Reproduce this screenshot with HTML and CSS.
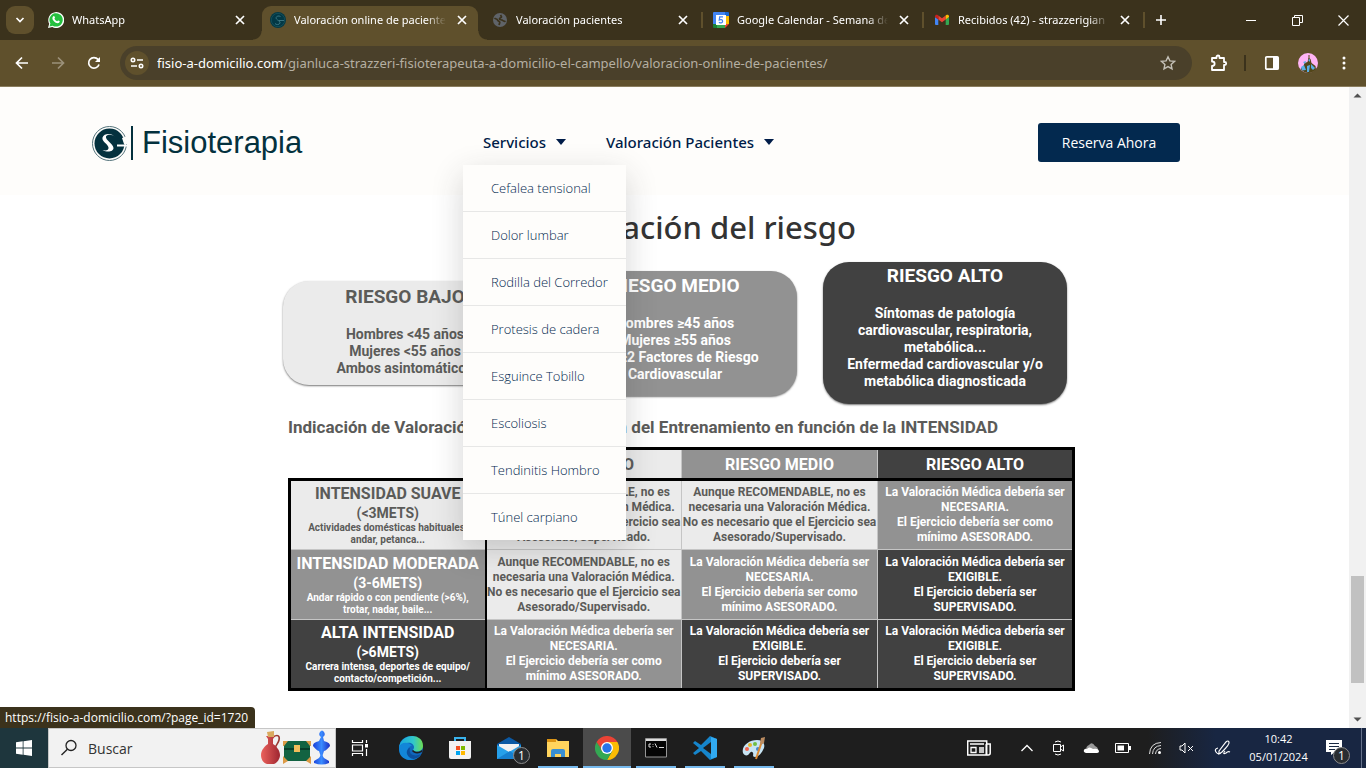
FILE: index.html
```html
<!DOCTYPE html>
<html lang="es">
<head>
<meta charset="utf-8">
<title>Valoración online de pacientes</title>
<link rel="stylesheet" href="styles.css">
</head>
<body>
<svg class="defs" width="0" height="0" aria-hidden="true">
  <symbol id="close" viewBox="0 0 10 10"><path d="M1 1l8 8M9 1L1 9" fill="none" stroke="#fff" stroke-width="1.7"/></symbol>
</svg>

<header class="tabstrip">
  <button class="tab-search" aria-label="Buscar pestañas"><svg width="10" height="10" viewBox="0 0 10 10"><path d="M1.5 3L5 6.5 8.500 3" fill="none" stroke="#fff" stroke-width="1.700"/></svg></button>
  <div class="tab">
    <svg class="favicon" viewBox="0 0 16 16"><path d="M0 16L1.200 11.800A8 8 0 1 1 4.300 15z" fill="#fff"/><path d="M1.500 14.500l.9-3A6.700 6.700 0 1 1 4.700 13.700z" fill="#25c03f"/><path d="M5.400 4.200c.5-.5.900-.3 1.100.2l.5 1.200c.1.500-.6.900-.6 1.200.6 1.100 1.400 1.900 2.600 2.400.4 0 .7-.9 1.200-.8l1.300.7c.6.400-.1 1.700-.8 2-2.700.9-7-3-6.200-5.600.2-.6.500-1 .9-1.300z" fill="#fff"/></svg>
    <span class="tab-title">WhatsApp</span>
    <button class="tab-close" aria-label="Cerrar"><svg width="10" height="10"><use href="#close"/></svg></button>
  </div>
  <div class="tab active">
    <svg class="favicon" viewBox="0 0 16 16"><circle cx="8" cy="8" r="8" fill="#023845"/><circle cx="8" cy="8" r="6.700" fill="none" stroke="#1d5a64" stroke-width=".6"/><path d="M10.500 4.500C8 3 5 5 6.500 7s4 2 3.500 4-4 2-5 .5M9 8.500h5" fill="none" stroke="#387480"/></svg>
    <span class="tab-title">Valoración online de pacientes</span>
    <button class="tab-close" aria-label="Cerrar"><svg width="10" height="10"><use href="#close"/></svg></button>
  </div>
  <div class="tab divided">
    <svg class="favicon" viewBox="0 0 16 16"><circle cx="8" cy="8" r="7" fill="#5f6368"/><path d="M2.500 6c1.500 1.500 2.500.5 3 2s2.500 1 2.300 2.500L7 13M13.500 9c-1.500 1-2.500-.3-3.500-1-1-.6-2.500.2-2.500-1.200S9.800 6 9.500 4.800L8.500 3" fill="none" stroke="#3b321c" stroke-width="1.700"/></svg>
    <span class="tab-title">Valoración pacientes</span>
    <button class="tab-close" aria-label="Cerrar"><svg width="10" height="10"><use href="#close"/></svg></button>
  </div>
  <div class="tab divided">
    <svg class="favicon" viewBox="0 0 16 16"><path d="M0 1q0-1 1-1h11v4H4v8H0z" fill="#4285f4"/><path d="M12 0h3q1 0 1 1v3h-4z" fill="#1967d2"/><path d="M12 4h4v8h-4z" fill="#fbbc04"/><path d="M0 12h4v4H1q-1 0-1-1z" fill="#188038"/><path d="M4 12h8v4H4z" fill="#34a853"/><path d="M12 12h4l-4 4z" fill="#ea4335"/><path d="M3 3h10v10H3z" fill="#fff"/><path d="M10 4.800H6.700L6.300 8c1.300-.8 3.300-.5 3.300 1.200S7 11.500 6 10.200" fill="none" stroke="#4285f4" stroke-width="1.300"/></svg>
    <span class="tab-title">Google Calendar - Semana del 1</span>
    <button class="tab-close" aria-label="Cerrar"><svg width="10" height="10"><use href="#close"/></svg></button>
  </div>
  <div class="tab divided">
    <svg class="favicon" viewBox="0 0 16 16"><path d="M1 5l3.300 2.500V13H2q-1 0-1-1z" fill="#4285f4"/><path d="M15 5l-3.300 2.500V13H14q1 0 1-1z" fill="#34a853"/><path d="M4.300 3.500L8 6.300l3.700-2.800v4L8 10.300 4.300 7.500z" fill="#ea4335"/><path d="M1 4.300C1 2.700 2.700 2.300 3.700 3l.6.500v4L1 5z" fill="#c5221f"/><path d="M15 4.300c0-1.600-1.700-2-2.700-1.300l-.6.500v4L15 5z" fill="#fbbc04"/></svg>
    <span class="tab-title">Recibidos (42) - strazzerigian</span>
    <button class="tab-close" aria-label="Cerrar"><svg width="10" height="10"><use href="#close"/></svg></button>
  </div>
  <button class="new-tab" aria-label="Nueva pestaña"><svg width="12" height="12" viewBox="0 0 12 12"><path d="M6 1v10M1 6h10" stroke="#fff" stroke-width="1.600"/></svg></button>
  <div class="window-controls">
    <button aria-label="Minimizar"><svg width="10" height="10"><path d="M0 5.500h10" stroke="#fff"/></svg></button>
    <button aria-label="Restaurar"><svg width="11" height="11"><path d="M.5 2.500h7v8h-7zM2.500 2.500v-2h8v7h-3" fill="none" stroke="#fff"/></svg></button>
    <button aria-label="Cerrar ventana"><svg width="11" height="11"><path d="M.5.5l10 10M10.500.5l-10 10" stroke="#fff" stroke-width="1.200"/></svg></button>
  </div>
</header>

<div class="toolbar">
  <button class="tool" aria-label="Atrás"><svg width="14" height="14" viewBox="0 0 14 14"><path d="M13 7H2M7 1.500L1.500 7 7 12.500" fill="none" stroke="#fff" stroke-width="1.700"/></svg></button>
  <button class="tool" aria-label="Adelante"><svg width="14" height="14" viewBox="0 0 14 14"><path d="M1 7h11M7 1.500L12.500 7 7 12.500" fill="none" stroke="#9c917a" stroke-width="1.700"/></svg></button>
  <button class="tool" aria-label="Recargar"><svg width="14" height="14" viewBox="0 0 14 14"><path d="M12 8.500A5.300 5.300 0 1 1 11 3.400L12.300 5" fill="none" stroke="#fff" stroke-width="1.700"/><path d="M13 1v5H8z" fill="#fff"/></svg></button>
  <div class="omnibox">
    <button class="site-info" aria-label="Información del sitio"><svg width="14" height="12" viewBox="0 0 14 12"><g fill="none" stroke="#fff" stroke-width="1.600"><circle cx="3" cy="3" r="1.700"/><path d="M7 3h6M1 9h6"/><circle cx="11" cy="9" r="1.700"/></g></svg></button>
    <a class="url" href="#"><b>fisio-a-domicilio.com</b>/gianluca-strazzeri-fisioterapeuta-a-domicilio-el-campello/valoracion-online-de-pacientes/</a>
    <button class="star" aria-label="Añadir a marcadores"><svg width="16" height="16" viewBox="0 0 16 16"><path d="M8 1.800l1.900 4.100 4.500.5-3.300 3 .9 4.400L8 11.600l-4 2.200.9-4.400-3.300-3 4.500-.5z" fill="none" stroke="#c4c0b7" stroke-width="1.400"/></svg></button>
  </div>
  <div class="extensions">
    <button aria-label="Extensiones"><svg width="18" height="18" viewBox="0 0 18 18"><path d="M2 4h4.500V3a1.500 1.500 0 0 1 3 0v1H14v4h.7a1.500 1.500 0 0 1 0 3H14v5H2v-4c3.500 0 3.500-4.500 0-4.500z" fill="none" stroke="#fff" stroke-width="1.800" stroke-linejoin="round"/></svg></button>
    <span class="tool-divider"></span>
    <button aria-label="Panel lateral"><svg width="16" height="16" viewBox="0 0 16 16"><rect x="1.800" y="1.800" width="12.400" height="12.400" rx="1" fill="none" stroke="#fff" stroke-width="1.700"/><path d="M9 2h5v12H9z" fill="#fff"/></svg></button>
    <button aria-label="Perfil"><svg width="20" height="20" viewBox="0 0 20 20"><circle cx="10" cy="10" r="10" fill="#ffb4f5"/><path d="M2.500 16l3-3 1-3 3-1 1-4 2 1 1 4 4 3 .5 3.500A10 10 0 0 1 2.500 16z" fill="#524619"/><path d="M3 14l3-2 2 5-4 .5zM9 13l3-1-1 7H9zM13 11l4 4-2 2-2-2zM10 7l2-1v3zM5 9l3-1-1 3z" fill="#58aee5"/><path d="M11 2v4" stroke="#524619"/></svg></button>
    <button aria-label="Menú"><svg width="4" height="16"><g fill="#fff"><circle cx="2" cy="3" r="1.500"/><circle cx="2" cy="8" r="1.500"/><circle cx="2" cy="13" r="1.500"/></g></svg></button>
  </div>
</div>

<main class="viewport">
  <div class="page">
    <div class="site-header">
      <a class="brand" href="#">
        <svg width="35" height="35" viewBox="0 0 35 35"><circle cx="17.500" cy="17.500" r="17" fill="none" stroke="#54737b"/><circle cx="17.500" cy="17.500" r="15" fill="#04313e"/><path d="M23 11c-2-2.500-8-3-9-.5-1 3.500 7.500 7.500 7.500 11.500 0 3.500-6 5-11 2 3 1 6.500.5 6-2.500-.5-3.500-7-6-6-10C12 7 20 7 23 11z" fill="#fff"/><path d="M25 19.500h10" stroke="#fff" stroke-width="2"/><path d="M30 12l5-2v8h-3z" fill="#fefdfb"/></svg>
        <span class="brand-bar"></span>
        <span class="brand-name">Fisioterapia</span>
      </a>
      <nav>
        <ul class="menu">
          <li><a href="#">Servicios <i class="caret"></i></a>
            <ul class="submenu">
              <li><a href="#">Cefalea tensional</a></li>
              <li><a href="#">Dolor lumbar</a></li>
              <li><a href="#">Rodilla del Corredor</a></li>
              <li><a href="#">Protesis de cadera</a></li>
              <li><a href="#">Esguince Tobillo</a></li>
              <li><a href="#">Escoliosis</a></li>
              <li><a href="#">Tendinitis Hombro</a></li>
              <li><a href="#">Túnel carpiano</a></li>
            </ul>
          </li>
          <li><a href="#">Valoración Pacientes <i class="caret"></i></a></li>
        </ul>
      </nav>
      <button class="book">Reserva Ahora</button>
    </div>

    <section class="content">
      <h1>Estratificación del riesgo</h1>
      <div class="chart">
        <div class="cards">
          <div class="card low"><h2>RIESGO BAJO</h2><p>Hombres &lt;45 años<br>Mujeres &lt;55 años<br>Ambos asintomáticos</p></div>
          <div class="card mid"><h2>RIESGO MEDIO</h2><p>Hombres ≥45 años<br>Mujeres ≥55 años<br>Con ≥2 Factores de Riesgo<br>Cardiovascular</p></div>
          <div class="card high"><h2>RIESGO ALTO</h2><p>Síntomas de patología<br>cardiovascular, respiratoria,<br>metabólica...<br>Enfermedad cardiovascular y/o<br>metabólica diagnosticada</p></div>
        </div>
        <p class="caption"><span>Indicación de Valoración Médica</span> <span>y Gestión del Entrenamiento en función de la INTENSIDAD</span></p>
        <table>
          <thead>
            <tr><td class="blank"></td><th class="low">RIESGO BAJO</th><th class="mid">RIESGO MEDIO</th><th class="high">RIESGO ALTO</th></tr>
          </thead>
          <tbody>
            <tr>
              <th class="low"><span class="level">INTENSIDAD SUAVE</span><span class="mets">(&lt;3METS)</span><small>Actividades domésticas habituales,<br>andar, petanca...</small></th>
              <td class="low">Aunque RECOMENDABLE, no es<br>necesaria una Valoración Médica.<br>No es necesario que el Ejercicio sea<br>Asesorado/Supervisado.</td>
              <td class="low">Aunque RECOMENDABLE, no es<br>necesaria una Valoración Médica.<br>No es necesario que el Ejercicio sea<br>Asesorado/Supervisado.</td>
              <td class="mid">La Valoración Médica debería ser<br>NECESARIA.<br>El Ejercicio debería ser como<br>mínimo ASESORADO.</td>
            </tr>
            <tr>
              <th class="mid"><span class="level">INTENSIDAD MODERADA</span><span class="mets">(3-6METS)</span><small>Andar rápido o con pendiente (&gt;6%),<br>trotar, nadar, baile...</small></th>
              <td class="low">Aunque RECOMENDABLE, no es<br>necesaria una Valoración Médica.<br>No es necesario que el Ejercicio sea<br>Asesorado/Supervisado.</td>
              <td class="mid">La Valoración Médica debería ser<br>NECESARIA.<br>El Ejercicio debería ser como<br>mínimo ASESORADO.</td>
              <td class="high">La Valoración Médica debería ser<br>EXIGIBLE.<br>El Ejercicio debería ser<br>SUPERVISADO.</td>
            </tr>
            <tr>
              <th class="high"><span class="level">ALTA INTENSIDAD</span><span class="mets">(&gt;6METS)</span><small>Carrera intensa, deportes de equipo/<br>contacto/competición...</small></th>
              <td class="mid">La Valoración Médica debería ser<br>NECESARIA.<br>El Ejercicio debería ser como<br>mínimo ASESORADO.</td>
              <td class="high">La Valoración Médica debería ser<br>EXIGIBLE.<br>El Ejercicio debería ser<br>SUPERVISADO.</td>
              <td class="high">La Valoración Médica debería ser<br>EXIGIBLE.<br>El Ejercicio debería ser<br>SUPERVISADO.</td>
            </tr>
          </tbody>
        </table>
      </div>
    </section>
  </div>
  <div class="scrollbar">
    <svg width="17" height="17"><path d="M4.500 10.500h8l-4-4z" fill="#505050"/></svg>
    <div class="track"><div class="thumb"></div></div>
    <svg width="17" height="17"><path d="M4.500 6.500h8l-4 4z" fill="#505050"/></svg>
  </div>
  <div class="status">https://fisio-a-domicilio.com/?page_id=1720</div>
</main>

<footer class="taskbar">
  <button class="start" aria-label="Inicio"><svg width="16" height="16" viewBox="0 0 16 16"><path d="M0 2.300L6.700 1.300v6.300H0zM7.500 1.200L16 0v7.600H7.500zM0 8.400h6.700v6.300L0 13.700zM7.500 8.400H16V16l-8.500-1.200z" fill="#fff"/></svg></button>
  <label class="search">
    <svg width="18" height="18" viewBox="0 0 18 18"><circle cx="11" cy="6.500" r="5" fill="none" stroke="#222" stroke-width="1.300"/><path d="M7.400 10.200L1.500 16" stroke="#222" stroke-width="1.400"/></svg>
    <input type="text" placeholder="Buscar" aria-label="Buscar">
    <svg width="72" height="36" viewBox="0 0 72 36">
      <defs><linearGradient id="vase"><stop offset="0" stop-color="#eb625d"/><stop offset="1" stop-color="#9e2630"/></linearGradient><linearGradient id="blue"><stop offset="0" stop-color="#1a3ed8"/><stop offset=".5" stop-color="#398bff"/><stop offset="1" stop-color="#1a2dc2"/></linearGradient></defs>
      <path d="M13 7c5-3 7-1 6 3-.5 3-3 5-4 8" fill="none" stroke="#9c3932" stroke-width="1.600"/><path d="M6 6h9l-2 3v5c3 2 7 6 7 11 0 4-3 8-6 9H7c-4-1-6-5-6-9 0-5 4-9 7-11V9z" fill="url(#vase)"/><path d="M7 2l7-1v6H8z" fill="#d9a95e"/>
      <path d="M24 13l2-2h22l2 2v18H24z" fill="#126342"/><path d="M24 19h26" stroke="#073d29" stroke-width="2"/><path d="M23 11h5l-4 5h-1zM51 11h-5l4 5h1zM23 34v-8l5 5zM51 34v-8l-5 5z" fill="#dc9a45"/><path d="M34 15h6v7h-6z" fill="#f2bd5b"/>
      <path d="M61 7q-3-2-1-5 2-3 4 0 2 3-1 5l1 4c3 1 6 2 6 5-2 2-4 5-6 5l-1 3q-1 2 1 4l5 3v2q-7 3-15 0v-2l5-3q2-2 1-4l-1-3c-2 0-4-3-6-5 0-3 3-4 6-5z" fill="url(#blue)"/>
    </svg>
  </label>
  <div class="apps">
    <button class="app taskview" aria-label="Vista de tareas"><svg width="18" height="16" viewBox="0 0 18 16"><path d="M1.500 0v2.500h10V0M1.500 16v-2.500h10V16M1.500 5h10v6h-10zM15.500 0v3M15.500 9v7" fill="none" stroke="#fff" stroke-width="1.200"/><path d="M14 4h3v3.500h-3z" fill="#fff"/></svg></button>
    <button class="app" aria-label="Edge"><svg width="24" height="24" viewBox="0 0 24 24"><defs><linearGradient id="edge"><stop offset="0" stop-color="#18a6df"/><stop offset=".6" stop-color="#31c7ca"/><stop offset="1" stop-color="#6ddd52"/></linearGradient></defs><circle cx="12" cy="12" r="12" fill="#1067bd"/><path d="M0 12C1-3 24-4 24 10c0 6-8 7-10 4 3-4-1-8-6-7-4 0-7 2-8 5z" fill="url(#edge)"/><path d="M0 11c2-5 10-6 13-1-4 0-5 4-3 7 2 4 8 5 12 1-4 8-17 8-21 0-1-2-1-5-1-7z" fill="#1286d8"/><path d="M11 12c-1 3 0 6 3 7 3 1 6 0 8-1-4 7-12 6-14 0-1-3 1-6 3-6z" fill="#0c4f9c"/><path d="M14 14c3 3 7 2 9.500-.500l-.5 2.500c-3 2-8 2-10-1z" fill="#1e1e1e"/></svg></button>
    <button class="app" aria-label="Microsoft Store"><svg width="24" height="24" viewBox="0 0 24 24"><path d="M7 6V2h10v4" fill="none" stroke="#39b3ed" stroke-width="2"/><path d="M1 5h22v16q0 2-2 2H3q-2 0-2-2z" fill="#f2f2f2"/><path d="M8 10h4v4H8z" fill="#f25022"/><path d="M13 10h4v4h-4z" fill="#7fba00"/><path d="M8 15h4v4H8z" fill="#00a4ef"/><path d="M13 15h4v4h-4z" fill="#ffb900"/></svg></button>
    <button class="app badge-host" aria-label="Correo"><svg width="24" height="24" viewBox="0 0 24 24"><path d="M0 8l12-7 12 7v5H0z" fill="#0b59a4"/><path d="M2 8h20v8H2z" fill="#f2f2f2"/><path d="M0 9l12 7 12-7v14H0z" fill="#26a0ea"/><path d="M0 23l13-8 11 8z" fill="#1680d0"/></svg><span class="badge">1</span></button>
    <button class="app open" aria-label="Explorador"><svg width="24" height="22" viewBox="0 0 24 22"><path d="M1 2h9l2 2h11v16H1z" fill="#ffd45d"/><path d="M1 2h9v3H1z" fill="#dc9414"/><path d="M5 20v-6q0-2 2-2h10q2 0 2 2v6h-4v-3H9v3z" fill="#398fd2"/></svg></button>
    <button class="app open current" aria-label="Chrome"><svg width="24" height="24" viewBox="0 0 24 24"><path d="M1.600 6A12 12 0 0 1 22.400 6H12z" fill="#ea4335"/><path d="M22.400 6A12 12 0 0 1 12 24l5.200-9L12 6z" fill="#fbbc04"/><path d="M1.600 6A12 12 0 0 0 12 24l5.200-9H6.800z" fill="#34a853"/><path d="M1.600 6l5.200 9L12 6z" fill="#ea4335"/><path d="M1.600 6L6.800 15l2 2A6 6 0 0 1 6 12z" fill="#34a853"/><circle cx="12" cy="12" r="6" fill="#fff"/><circle cx="12" cy="12" r="4.700" fill="#2874e9"/></svg></button>
    <button class="app open" aria-label="Símbolo del sistema"><svg width="22" height="20" viewBox="0 0 22 20"><path d="M.5.500h21v18.500H.5z" fill="#050505" stroke="#969696"/><path d="M1 1h20v2H1z" fill="#ddd"/><path d="M6 6H4v3h2M8 6v.8M8 8.300V9M10 5.500l2 4M14 9.500h5" fill="none" stroke="#ddd"/></svg></button>
    <button class="app open" aria-label="Visual Studio Code"><svg width="24" height="24" viewBox="0 0 24 24"><path d="M17 0l7 3v18l-7 3L8 15l-6 4-2-2 6-5-6-5 2-2 6 4z" fill="#1685cb"/><path d="M18 6v12l-8-6z" fill="#1e1e1e"/><path d="M18 1l6 2v18l-6 2z" fill="#31aaf1"/></svg></button>
    <button class="app open" aria-label="Paint"><svg width="24" height="24" viewBox="0 0 24 24"><path d="M1 17C-1 10 7 4 15 4c7 0 9 6 6 10-2 4-5 7-8 7-4 0 0-4-3-5-2-1-2 2-4 3s-4 0-5-2z" fill="#c8e4f3"/><circle cx="5" cy="13" r="2" fill="#f2644d"/><circle cx="8" cy="9" r="2" fill="#e5b52a"/><circle cx="13" cy="8" r="2" fill="#6ebf43"/><circle cx="16" cy="13" r="2" fill="#4388cf"/><path d="M14 23l6-18" stroke="#dd8a32" stroke-width="2"/><path d="M18 7l1-5 4-1-1 6-3 2z" fill="#bb8c61"/></svg></button>
  </div>
  <div class="tray">
    <button class="news" aria-label="Noticias"><svg width="24" height="16" viewBox="0 0 24 16"><path d="M.7 1h19v14h-19zM20 4h3.200v9q0 2-2 2h-2V4" fill="none" stroke="#fff" stroke-width="1.500"/><path d="M3 4h14M12 8h5M12 10h5M12 12h5M4 7.500h5v5H4z" fill="none" stroke="#fff" stroke-width="1.300"/></svg></button>
    <button aria-label="Mostrar iconos ocultos"><svg width="12" height="8"><path d="M.5 7L6 1.500 11.500 7" fill="none" stroke="#fff" stroke-width="1.300"/></svg></button>
    <button aria-label="Cámara"><svg width="14" height="16"><path d="M1.500 4.500h7v7h-7zM8.500 7l3-2v6l-3-2M3 2q3-2 6 0M3 14q3 2 6 0" fill="none" stroke="#fff"/></svg></button>
    <button aria-label="OneDrive"><svg width="16" height="12"><path d="M3 8q0-4 3-5 3-4 6 1 3 1 3 4z" fill="#9a9a9a"/><path d="M3 11q-3-1-2-3 1-2 3-1 2-3 6 0 6-1 6 3-1 1-2 1z" fill="#fff"/></svg></button>
    <button aria-label="Batería"><svg width="16" height="10"><path d="M.5.5h13v9H.5z" fill="none" stroke="#fff"/><path d="M2.500 2.500H9v5H2.500zM14 3h2v4h-2z" fill="#fff"/></svg></button>
    <button aria-label="Wi-Fi"><svg width="14" height="14"><g fill="none" stroke="#ddd"><path d="M1.500 13Q2 2 13 1.500M4.500 13Q5 5 13 4.500M7.500 13q.5-5 5.500-5.500"/></g><circle cx="11.500" cy="11.500" r="1.500" fill="#fff"/></svg></button>
    <button aria-label="Volumen"><svg width="16" height="12"><path d="M1 4h2l3-3v10L3 8H1zM9 4l5 5M14 4L9 9" fill="none" stroke="#fff"/></svg></button>
    <button class="pen" aria-label="Windows Ink"><svg width="18" height="16"><path d="M5 11l7-9q2-2 3 0t-7 10l-3 2zM4 8q-4 1-2 4t5 1M11 11q-3 4 1 2 2-2 4-1" fill="none" stroke="#fff" stroke-width="1.200"/></svg></button>
    <div class="clock"><time>10:42</time><time>05/01/2024</time></div>
    <button class="notice badge-host" aria-label="Notificaciones"><svg width="16" height="16"><path d="M0 0h16v12H9l-4 3v-3H0z" fill="#fff"/><path d="M3 3.500h10M3 6.500h10M3 9.500h6" stroke="#1a2942"/></svg><span class="badge">1</span></button>
    <span class="peek"></span>
  </div>
</footer>
</body>
</html>
```
FILE: styles.css
```css
* { box-sizing: border-box; }

body {
  margin: 0;
  height: 100vh;
  display: flex;
  flex-direction: column;
  overflow: hidden;
  font-family: "Open Sans", "Noto Sans", sans-serif;
  background: #fff;
}

button {
  border: 0;
  padding: 0;
  margin: 0;
  background: none;
  font-family: inherit;
  display: flex;
  align-items: center;
  justify-content: center;
}

a { color: inherit; text-decoration: none; }
ul { list-style: none; margin: 0; padding: 0; }
.defs { position: absolute; }

/* Tab strip */
.tabstrip {
  flex: none;
  height: 40px;
  display: flex;
  align-items: center;
  background: #3b321c;
  color: #fff;
}
.tab-search {
  width: 28px;
  height: 28px;
  margin: 0 7px 0 6px;
  border-radius: 9px;
  background: #5f502c;
}
.tab {
  position: relative;
  flex: 0 1 221px;
  min-width: 0;
  height: 40px;
  padding: 0 17px 0 7px;
  display: flex;
  align-items: center;
}
.tab.active { padding: 0 16px 0 8px; }
.tab.divided { padding: 0 16px 0 9px; }
.favicon { flex: none; width: 16px; height: 16px; margin-right: 8px; }
.tab-title {
  flex: 1;
  min-width: 0;
  overflow: hidden;
  white-space: nowrap;
  font-family: "Noto Sans", sans-serif;
  font-size: 11px;
  line-height: 18px;
  mask-image: linear-gradient(to right, #000 calc(100% - 20px), transparent);
}
.tab-close { flex: none; width: 10px; height: 10px; margin-left: 11px; }
.active { isolation: isolate; }
.active::before {
  content: "";
  position: absolute;
  z-index: -1;
  inset: 6px 5px 0 0;
  border-radius: 9px 9px 0 0;
  background: #5f502c;
}
.active::after {
  content: "";
  position: absolute;
  z-index: -1;
  inset: auto -4px 0 -9px;
  height: 9px;
  background:
    radial-gradient(circle at 0 0, transparent 8px, #5f502c 9px) left / 9px 9px no-repeat,
    radial-gradient(circle at 100% 0, transparent 8px, #5f502c 9px) right / 9px 9px no-repeat;
}
.divided::after {
  content: "";
  position: absolute;
  right: 1px;
  top: 12px;
  width: 2px;
  height: 16px;
  background: #5f502c;
}
.new-tab { width: 30px; height: 30px; }
.window-controls { display: flex; margin-left: auto; }
.window-controls button { width: 46px; height: 40px; }

/* Toolbar */
.toolbar {
  flex: none;
  height: 47px;
  padding: 0 4px;
  display: flex;
  align-items: center;
  background: #5f502c;
  border-bottom: 1px solid #8a7d5e;
}
.tool { width: 36px; height: 34px; }
.omnibox {
  flex: 1;
  min-width: 0;
  height: 34px;
  margin-left: 8px;
  padding: 0 16px 0 5px;
  display: flex;
  align-items: center;
  gap: 8px;
  border-radius: 17px;
  background: #4a402a;
}
.site-info { width: 24px; height: 24px; border-radius: 12px; background: #5f502c; }
.url {
  flex: 1;
  overflow: hidden;
  white-space: nowrap;
  font-family: "Noto Sans", sans-serif;
  font-size: 13px;
  color: #b5afa2;
}
.url b { font-weight: 400; color: #fff; }
.extensions { flex: none; padding-left: 9px; display: flex; align-items: center; }
.extensions button { width: 36px; height: 34px; }
.tool-divider { width: 2px; height: 16px; margin: 0 8px 0 7px; background: #3b321c; }

/* Viewport */
.viewport { position: relative; flex: 1; min-height: 0; display: flex; }
.page { flex: 1; min-width: 0; overflow: hidden; }
.scrollbar {
  flex: 0 0 17px;
  display: flex;
  flex-direction: column;
  background: #f1f1f1;
}
.scrollbar svg { flex: none; }
.track { flex: 1; display: flex; flex-direction: column; justify-content: flex-end; padding: 0 2px 28px; }
.thumb { height: 107px; background: #c1c1c1; }
.status {
  position: absolute;
  left: 0;
  bottom: 0;
  padding: 0 7px 0 5px;
  border-radius: 0 4px 0 0;
  background: #3b321c;
  color: #fff;
  font-size: 12px;
  line-height: 21px;
}

/* Site header */
.site-header {
  height: 108px;
  padding: 2px 169px 0 92px;
  display: flex;
  align-items: center;
  background: #fefdfb;
}
.brand {
  flex: 0 0 391px;
  padding-top: 2px;
  display: flex;
  align-items: center;
  color: #04313e;
}
.brand-bar { width: 2px; height: 34px; margin: 0 9px 0 4px; background: #04313e; }
.brand-name { font: 31px/36px "Liberation Sans", Arial, sans-serif; }
.menu { display: flex; gap: 40px; }
.menu > li { position: relative; }
.menu > li > a {
  display: flex;
  align-items: center;
  gap: 10px;
  white-space: nowrap;
  font-family: "Noto Sans", sans-serif;
  font-size: 15px;
  font-weight: 500;
  line-height: 44px;
  color: #001c48;
}
.caret {
  border: 5px solid transparent;
  border-top: 6px solid #001c48;
  border-bottom: 0;
}
.submenu {
  position: absolute;
  z-index: 2;
  top: 45px;
  left: -20px;
  width: 163px;
  background: #fefdfb;
  box-shadow: 0 10px 30px rgba(45, 45, 45, 0.2);
}
.submenu li + li { border-top: 1px solid #e7e7e6; }
.submenu a {
  display: block;
  padding-left: 28px;
  white-space: nowrap;
  font-size: 13px;
  font-weight: 300;
  line-height: 46px;
  color: #03294f;
}
.book {
  margin-left: auto;
  width: 142px;
  height: 39px;
  border-radius: 3px;
  background: #03294f;
  color: #fff;
  font-size: 14px;
}

/* Content */
.content { display: flex; flex-direction: column; align-items: center; }
h1 {
  margin: 11px 0 13px;
  font-family: "Noto Sans", sans-serif;
  font-size: 31px;
  font-weight: 500;
  line-height: 43px;
  color: #333;
}
.chart {
  width: 792px;
  margin-left: 9px;
  font-family: Roboto, sans-serif;
  font-weight: 700;
}
.low { background: #ebebeb; color: #5b5b59; }
.mid { background: #929292; color: #fff; }
.high { background: #414141; color: #fff; }
.cards { display: flex; align-items: center; gap: 26px; }
.card {
  width: 244px;
  border-radius: 26px;
  text-align: center;
  font-size: 14px;
  line-height: 17px;
  box-shadow: 0 1px 2px #777;
}
.card h2 { margin: 0; font-size: 19px; line-height: 28px; }
.card p { margin: 15px 0 0; }
.card.low { padding: 2px 0 8px; }
.card.mid { padding: 1px 0 13px; }
.card.high { padding: 0 0 14px; }
.caption {
  margin: 13px 77px 10px 5px;
  display: flex;
  justify-content: space-between;
  white-space: nowrap;
  font-size: 17px;
  line-height: 20px;
  color: #5b5b59;
}
table {
  width: 787px;
  margin-left: 5px;
  table-layout: fixed;
  border-collapse: collapse;
  border-right: 3px solid #000;
}
td, th {
  padding: 0;
  text-align: center;
  font-size: 12px;
  line-height: 15px;
  white-space: nowrap;
  border: 1px solid #c5c5c5;
}
thead th { height: 31px; font-size: 16px; border-top: 3px solid #000; border-bottom: 3px solid #000; }
thead th.low { border-left: 2px solid #000; }
tbody tr { height: 70px; }
thead .blank { border: 0; border-bottom: 3px solid #000; }
tbody th { border-left: 3px solid #000; border-right: 2px solid #000; }
tbody tr:last-child > * { border-bottom: 3px solid #000; }
.level, .mets, small { display: block; }
.level { font-size: 16px; line-height: 20px; }
.mets { font-size: 14px; line-height: 18px; }
small { font-size: 10px; line-height: 12px; }

/* Taskbar */
.taskbar {
  flex: none;
  height: 40px;
  display: flex;
  align-items: center;
  background: linear-gradient(to right, #1e1e1e 84%, #182642 89%);
  color: #fff;
}
.start { width: 48px; height: 40px; background: #1e363d; }
.search {
  width: 288px;
  height: 40px;
  padding: 0 3px 0 11px;
  display: flex;
  align-items: center;
  border: 1px solid #c6c6c6;
  background: #f2f2f2;
}
.search input {
  flex: 1;
  min-width: 0;
  margin-left: 10px;
  padding: 0;
  border: 0;
  outline: 0;
  background: none;
  font: 14px "Open Sans", sans-serif;
}
.search input::placeholder { color: #333; opacity: 1; }
.apps { display: flex; gap: 1px; }
.app { width: 48px; height: 40px; }
.taskview { margin-right: 2px; }
.open {
  background: linear-gradient(#76b9ed, #76b9ed) bottom / 40px 2px no-repeat;
}
.current {
  background: linear-gradient(#76b9ed, #76b9ed) bottom / 48px 2px no-repeat, #4b4b4b;
}
.badge-host { position: relative; }
.badge {
  position: absolute;
  right: 3px;
  bottom: 4px;
  width: 17px;
  height: 17px;
  border: 1px solid #8c8c8c;
  border-radius: 50%;
  background: #292d31;
  color: #fff;
  font-size: 12px;
  line-height: 15px;
  text-align: center;
}
.tray { margin-left: auto; display: flex; align-items: center; }
.tray button { width: 32px; height: 40px; }
.tray .news { width: 48px; margin-right: 8px; }
.tray .pen { width: 40px; }
.clock {
  width: 71px;
  display: flex;
  flex-direction: column;
  align-items: center;
  font-size: 11px;
  line-height: 18px;
}
.tray .notice { width: 43px; padding-right: 4px; }
.notice .badge { right: 7px; }
.peek { width: 1px; height: 40px; margin: 0 4px; background: #65718a; }
```
